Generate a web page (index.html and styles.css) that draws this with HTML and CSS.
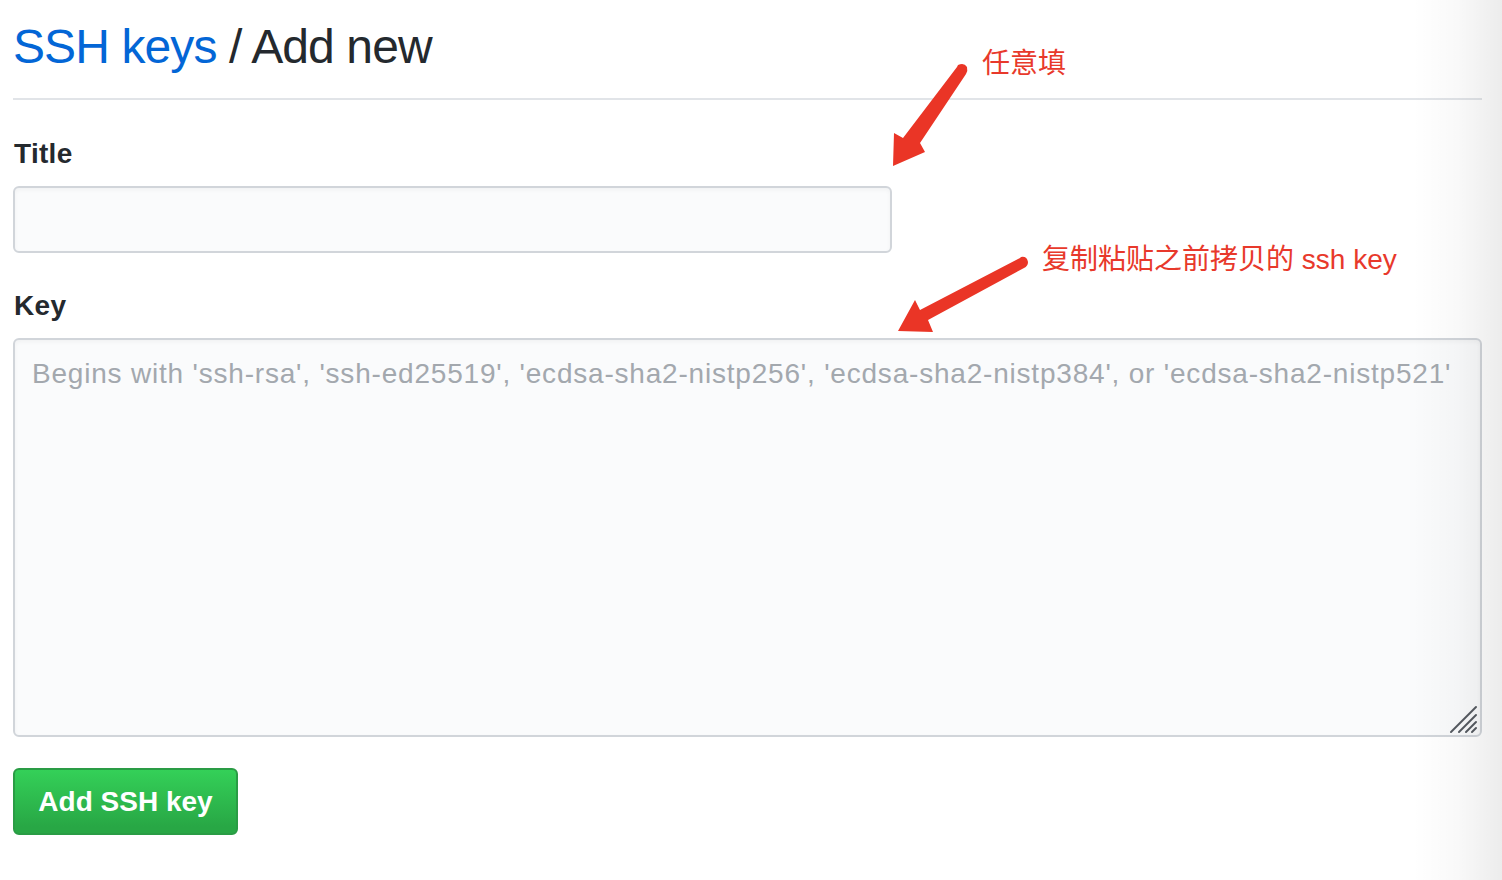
FILE: index.html
```html
<!DOCTYPE html>
<html lang="zh">
<head>
<meta charset="utf-8">
<title>SSH keys / Add new</title>
<link rel="stylesheet" href="styles.css">
</head>
<body>
<div class="page">
  <h1 class="subhead"><a class="crumb" href="#">SSH keys</a> / Add new</h1>
  <form class="form">
    <label class="label" for="title">Title</label>
    <input class="input title-input" id="title" type="text">
    <label class="label key-label" for="key">Key</label>
    <div class="textarea-wrap">
      <textarea class="input key-input" id="key" placeholder="Begins with 'ssh-rsa', 'ssh-ed25519', 'ecdsa-sha2-nistp256', 'ecdsa-sha2-nistp384', or 'ecdsa-sha2-nistp521'"></textarea>
      <svg class="grip" width="30" height="30" viewBox="0 0 30 30">
        <g stroke="#555a60" stroke-width="2" stroke-linecap="round">
          <line x1="2" y1="28" x2="27" y2="3"/>
          <line x1="10" y1="28" x2="27" y2="11"/>
          <line x1="17" y1="28" x2="27" y2="18"/>
          <line x1="23" y1="28" x2="27" y2="24"/>
        </g>
      </svg>
    </div>
    <button class="btn" type="button">Add SSH key</button>
  </form>
</div>

<div class="note note-title">任意填</div>
<div class="note note-key">复制粘贴之前拷贝的 ssh key</div>

<svg class="arrows" width="1502" height="880" viewBox="0 0 1502 880">
  <g fill="#ea3526">
    <path d="M958 65 Q964 62 967 67 Q968 71 966 74 L920 143 L925 152 L893 166 L894 133 L903 138 L957 67 Z"/>
    <path d="M1021 257 Q1027 256 1028 262 Q1028 266 1024 268 L928 320 L933 332 L898 331 L915 300 L920 310 L1020 258 Z"/>
  </g>
</svg>

<div class="edge-shade"></div>
</body>
</html>
```

FILE: styles.css
```css
html, body {
  margin: 0;
  padding: 0;
  background: #ffffff;
}

body {
  font-family: "Liberation Sans", Arial, "Noto Sans CJK SC", sans-serif;
  color: #24292e;
  width: 1502px;
  height: 880px;
  overflow: hidden;
  position: relative;
}

.page {
  padding: 17px 20px 0 13px;
  width: 1469px;
}

.subhead {
  margin: 0;
  font-size: 48px;
  font-weight: 400;
  line-height: 60px;
  letter-spacing: -0.9px;
  padding-bottom: 21px;
  border-bottom: 2px solid #e1e4e8;
  color: #24292e;
}

.crumb {
  color: #0366d6;
  text-decoration: none;
}

.form {
  display: flex;
  flex-direction: column;
  align-items: flex-start;
}

.label {
  display: block;
  font-size: 28px;
  font-weight: 700;
  line-height: 42px;
  letter-spacing: 0.3px;
  margin-top: 33px;
  margin-bottom: 11px;
  padding-left: 1px;
}

.key-label {
  margin-top: 32px;
}

.input {
  box-sizing: border-box;
  background: #fafbfc;
  border: 2px solid #d1d5da;
  border-radius: 6px;
  box-shadow: inset 0 2px 4px rgba(27, 31, 35, 0.04);
  font-family: "Liberation Sans", Arial, sans-serif;
  font-size: 28px;
  color: #24292e;
  outline: none;
  margin: 0;
}

.title-input {
  width: 879px;
  height: 67px;
  padding: 12px 16px;
}

.textarea-wrap {
  position: relative;
  width: 1469px;
  height: 399px;
}

.key-input {
  display: block;
  width: 1469px;
  height: 399px;
  padding: 14px 17px;
  line-height: 40px;
  letter-spacing: 0.8px;
  resize: none;
}

.key-input::placeholder {
  color: #a3a8ae;
  opacity: 1;
}

.grip {
  position: absolute;
  right: 3px;
  bottom: 3px;
}

.btn {
  margin-top: 31px;
  width: 225px;
  height: 67px;
  box-sizing: border-box;
  border: 2px solid #2a9c45;
  border-radius: 6px;
  background-image: linear-gradient(-180deg, #34d058 0%, #28a745 90%);
  color: #ffffff;
  font-family: "Liberation Sans", Arial, sans-serif;
  font-size: 28px;
  font-weight: 700;
  padding: 0;
  cursor: pointer;
}

.note {
  position: absolute;
  color: #e8392b;
  font-family: "Liberation Sans", "Noto Sans CJK SC", sans-serif;
  font-size: 28px;
  line-height: 36px;
  white-space: nowrap;
}

.note-title {
  left: 982px;
  top: 46px;
}

.note-key {
  left: 1042px;
  top: 242px;
}

.arrows {
  position: absolute;
  left: 0;
  top: 0;
  pointer-events: none;
}

.edge-shade {
  position: absolute;
  right: 0;
  top: 0;
  width: 90px;
  height: 880px;
  background: linear-gradient(to right, rgba(0, 0, 0, 0) 0%, rgba(0, 0, 0, 0.025) 50%, rgba(0, 0, 0, 0.075) 100%);
  pointer-events: none;
}
```
